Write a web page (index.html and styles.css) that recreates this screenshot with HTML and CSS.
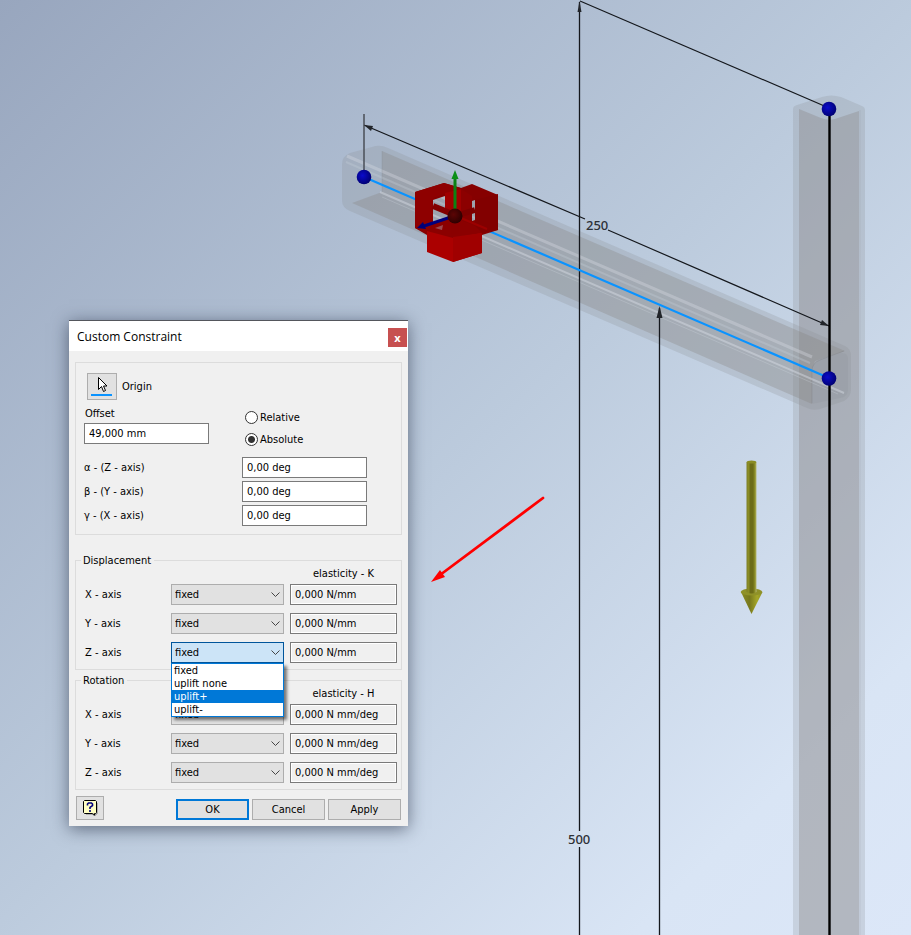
FILE: index.html
```html
<!DOCTYPE html>
<html lang="en">
<head>
    <meta charset="UTF-8">
    <meta name="viewport" content="width=device-width, initial-scale=1.0">
    <title>Custom Constraint</title>
    <link rel="stylesheet" href="styles.css">
</head>
<body>
<main class="viewport">
    <!-- 3D model -->
    <svg class="scene" viewBox="0 0 911 935" preserveAspectRatio="xMidYMid slice" role="img" aria-label="Frame model">
        <defs>
            <radialGradient id="nodeFill" cx="0.4" cy="0.4" r="0.65">
                <stop offset="0" stop-color="#0a0acb"/>
                <stop offset="1" stop-color="#00006e"/>
            </radialGradient>
            <radialGradient id="hubFill" cx="0.4" cy="0.4" r="0.65">
                <stop offset="0" stop-color="#5c0505"/>
                <stop offset="1" stop-color="#2b0000"/>
            </radialGradient>
            <linearGradient id="shaftFill">
                <stop offset="0" stop-color="#7f8028"/>
                <stop offset="0.2" stop-color="#8a8c24"/>
                <stop offset="0.4" stop-color="#6c6c18"/>
                <stop offset="0.65" stop-color="#6c6c18"/>
                <stop offset="0.85" stop-color="#8f9128"/>
                <stop offset="1" stop-color="#b5b878"/>
            </linearGradient>
            <linearGradient id="coneFill">
                <stop offset="0" stop-color="#8a8c24"/>
                <stop offset="0.4" stop-color="#77781d"/>
                <stop offset="0.75" stop-color="#a5a728"/>
                <stop offset="1" stop-color="#8a8c24"/>
            </linearGradient>
        </defs>

        <!-- column -->
        <path d="M793 935V109Q793 106 797 105L822 97Q831 94 841 97L862 106Q865 107 865 110V935Z" fill="#8c8f94" fill-opacity="0.24"/>
        <path d="M799 935V109L821 118Q828 121 835 119L859 111V935Z" fill="#85817f" fill-opacity="0.32"/>
        <path d="M860 110V935" stroke="#8b9097" stroke-opacity="0.2"/>

        <!-- beam -->
        <path d="M342 165Q342 156 350 153L372 147Q380 144 388 148L845 346Q851 349 851 356V389Q851 397 844 401L820 409Q813 411 807 408L350 211Q342 208 342 200Z" fill="#8c8f94" fill-opacity="0.25"/>
        <path d="M382 151L845 351L815 361L812 369V404L352 203L382 192Z" fill="#85817f" fill-opacity="0.3"/>
        <path d="M812 404V371Q812 363 820 360L840 353Q848 352 848 359V391Q847 397 840 398Z" fill="#8e9096" fill-opacity="0.2"/>
        <path d="M812 403V371Q812 363 820 360L844 351" fill="none" stroke="#77797d" stroke-opacity="0.3"/>
        <path d="M347 156L812 357" stroke="#d9dee6" stroke-opacity="0.35" stroke-width="3"/>
        <path d="M346 162L810 363" stroke="#c7cfda" stroke-opacity="0.3" stroke-width="2"/>
        <path d="M380 192L844 393" stroke="#d9dee6" stroke-opacity="0.45" stroke-width="2"/>
        <path d="M382 197L838 394" stroke="#d9dee6" stroke-opacity="0.25"/>
        <path d="M382 151V192" stroke="#84888e" stroke-opacity="0.25"/>

        <!-- dimensions -->
        <g fill="none" stroke="#14171c" stroke-width="1">
            <path d="M579.5 2V831M579.5 847V935" stroke-width="1.3"/>
            <path d="M659.5 308V935" stroke-width="1.3"/>
            <path d="M580 1L829 108" stroke-width="1.2"/>
            <path d="M364 125L585 219M608 230L829 326" stroke-width="1.2"/>
            <path d="M364 114V177" stroke="#50555e" stroke-width="1.6"/>
        </g>
        <g fill="#22252a">
            <path d="M579.5 1L577.5 12H581.5Z"/>
            <path d="M659.5 306L656.5 318H662.5Z"/>
            <path d="M364 125L373 126L371 131Z"/>
            <path d="M829 326L820 325L822 320Z"/>
        </g>
        <text class="dimension" x="586" y="230">250</text>
        <text class="dimension" x="568" y="844">500</text>

        <path d="M829.5 108V935" stroke="#000000" stroke-width="2.4"/>
        <path d="M364 177L829 378" stroke="#0a93ff" stroke-width="2.2"/>
        <circle cx="829" cy="109" r="7.3" fill="url(#nodeFill)"/>
        <circle cx="829" cy="378.5" r="7.3" fill="url(#nodeFill)"/>
        <circle cx="364" cy="177" r="7.3" fill="url(#nodeFill)"/>

        <!-- constraint symbol -->
        <g>
            <path fill-rule="evenodd" d="M415 192L444 183L461 188L472 184L498 195V230L482 235H427L415 228ZM433 200V224L452 218L445 212V196ZM472 201V221L475 220V200Z" fill="#860000"/>
            <path d="M415 192L444 183L461 188L433 198V224L427 233L415 228Z" fill="#8e0000"/>
            <path d="M445 193L461 189V212H445Z" fill="#a00000"/>
            <path d="M461 189L472 196V212H461Z" fill="#8c0000"/>
            <path d="M475 200L498 194V230L475 234Z" fill="#820000"/>
            <path d="M433 224L453 217L475 226L482 233L453 240L427 232Z" fill="#8b0000"/>
            <path d="M427 231L453 238L482 233V253L453 262L427 252Z" fill="#ab0000"/>
            <path d="M453 237L482 233V253L453 262Z" fill="#a00000"/>
            <path d="M435 228L443 225L442 230Z" fill="#9c4a50"/>
            <path d="M433 206L455 215" stroke="#820000" stroke-width="6"/>
            <path d="M455 216L475 210" stroke="#7d0000" stroke-width="6"/>
            <path d="M455 216V234" stroke="#8a0000" stroke-width="8"/>
            <path d="M456 216L487 229" stroke="#9c0000" stroke-width="2"/>
            <path d="M455 215V178" stroke="#0b8213" stroke-width="3"/>
            <path d="M455 170L451.5 179H458.5Z" fill="#0b8f16"/>
            <path d="M451 217L424 226" stroke="#00007d" stroke-width="3"/>
            <path d="M417 228L423 222L426 229Z" fill="#000078"/>
            <circle cx="455" cy="216" r="7.5" fill="url(#hubFill)"/>
        </g>

        <!-- load arrow -->
        <path d="M741 592L751.5 614L762.5 592Z" fill="url(#coneFill)"/>
        <ellipse cx="751.5" cy="592" rx="10.8" ry="3.5" fill="#8f9128"/>
        <path d="M746.5 462V592Q751.5 595 756.5 592V462Z" fill="url(#shaftFill)"/>
        <ellipse cx="751.5" cy="462" rx="4.8" ry="1.6" fill="#8a8c24"/>

        <!-- callout -->
        <path d="M543 498L440 575" stroke="#ff0000" stroke-width="2.8" stroke-linecap="round"/>
        <path d="M431 582L440 570L445 577Z" fill="#ff0000"/>
    </svg>

    <!-- Custom Constraint dialog -->
    <form class="dialog" role="dialog" aria-labelledby="dialogTitle">
        <header class="title-bar">
            <h1 id="dialogTitle">Custom Constraint</h1>
            <button type="button" class="close-btn" aria-label="Close">x</button>
        </header>

        <div class="dialog-body">
            <fieldset class="group origin-group">
                <div class="origin-row">
                    <button type="button" id="origin" class="pick-btn">
                        <svg width="22" height="20" viewBox="0 0 22 20" aria-hidden="true">
                            <path d="M7.5 0.5V12.5L10.5 9.5L12.5 14.5L14.5 13.5L12.5 9H16Z" fill="#ffffff" stroke="#000000"/>
                            <path d="M0 18H21" stroke="#0a93ff" stroke-width="2"/>
                        </svg>
                    </button>
                    <label for="origin">Origin</label>
                </div>
                <div class="offset-row">
                    <div class="offset-field">
                        <label for="offset">Offset</label>
                        <input type="text" id="offset" value="49,000 mm">
                    </div>
                    <div class="radio-list">
                        <label><input type="radio" name="mode">Relative</label>
                        <label><input type="radio" name="mode" checked>Absolute</label>
                    </div>
                </div>
                <div class="angle-grid">
                    <label for="alpha">α - (Z - axis)</label>
                    <input type="text" id="alpha" value="0,00 deg">
                    <label for="beta">β - (Y - axis)</label>
                    <input type="text" id="beta" value="0,00 deg">
                    <label for="gamma">γ - (X - axis)</label>
                    <input type="text" id="gamma" value="0,00 deg">
                </div>
            </fieldset>

            <fieldset class="group axis-group">
                <legend>Displacement</legend>
                <div class="axis-grid">
                    <span class="column-title">elasticity - K</span>

                    <label for="dispX">X - axis</label>
                    <div class="select-box">
                        <select id="dispX"><option>fixed</option><option>uplift none</option><option>uplift+</option><option>uplift-</option></select>
                        <svg class="chevron" width="9" height="6" viewBox="0 0 9 6" aria-hidden="true"><path d="M0.5 0.5L4.5 4.5L8.5 0.5"/></svg>
                    </div>
                    <input type="text" value="0,000 N/mm" aria-label="X elasticity K" readonly>

                    <label for="dispY">Y - axis</label>
                    <div class="select-box">
                        <select id="dispY"><option>fixed</option><option>uplift none</option><option>uplift+</option><option>uplift-</option></select>
                        <svg class="chevron" width="9" height="6" viewBox="0 0 9 6" aria-hidden="true"><path d="M0.5 0.5L4.5 4.5L8.5 0.5"/></svg>
                    </div>
                    <input type="text" value="0,000 N/mm" aria-label="Y elasticity K" readonly>

                    <label for="dispZ">Z - axis</label>
                    <div class="select-box open">
                        <select id="dispZ"><option>fixed</option><option>uplift none</option><option>uplift+</option><option>uplift-</option></select>
                        <svg class="chevron" width="9" height="6" viewBox="0 0 9 6" aria-hidden="true"><path d="M0.5 0.5L4.5 4.5L8.5 0.5"/></svg>
                        <ul class="option-list" role="listbox" aria-label="Z - axis">
                            <li role="option">fixed</li>
                            <li role="option">uplift none</li>
                            <li role="option" class="active" aria-selected="true">uplift+</li>
                            <li role="option">uplift-</li>
                        </ul>
                    </div>
                    <input type="text" value="0,000 N/mm" aria-label="Z elasticity K" readonly>
                </div>
            </fieldset>

            <fieldset class="group axis-group">
                <legend>Rotation</legend>
                <div class="axis-grid">
                    <span class="column-title">elasticity - H</span>

                    <label for="rotX">X - axis</label>
                    <div class="select-box">
                        <select id="rotX"><option>fixed</option></select>
                        <svg class="chevron" width="9" height="6" viewBox="0 0 9 6" aria-hidden="true"><path d="M0.5 0.5L4.5 4.5L8.5 0.5"/></svg>
                    </div>
                    <input type="text" value="0,000 N mm/deg" aria-label="X elasticity H" readonly>

                    <label for="rotY">Y - axis</label>
                    <div class="select-box">
                        <select id="rotY"><option>fixed</option></select>
                        <svg class="chevron" width="9" height="6" viewBox="0 0 9 6" aria-hidden="true"><path d="M0.5 0.5L4.5 4.5L8.5 0.5"/></svg>
                    </div>
                    <input type="text" value="0,000 N mm/deg" aria-label="Y elasticity H" readonly>

                    <label for="rotZ">Z - axis</label>
                    <div class="select-box">
                        <select id="rotZ"><option>fixed</option></select>
                        <svg class="chevron" width="9" height="6" viewBox="0 0 9 6" aria-hidden="true"><path d="M0.5 0.5L4.5 4.5L8.5 0.5"/></svg>
                    </div>
                    <input type="text" value="0,000 N mm/deg" aria-label="Z elasticity H" readonly>
                </div>
            </fieldset>

            <footer class="actions">
                <button type="button" class="btn help-btn" aria-label="Help">
                    <svg width="15" height="16" viewBox="0 0 15 16" aria-hidden="true">
                        <path d="M3 14H9L12 16V14H14V3" fill="none" stroke="#808080"/>
                        <path d="M1.5 0.5H12.5L13.5 1.5V12.5L12.5 13.5H11.5V15L9.5 13.5H1.5L0.5 12.5V1.5Z" fill="#ffffc4" stroke="#000000"/>
                        <path d="M4.5 5.5V4L5.5 3H8.5L9.5 4V5.5L7 7.5V9M7 10V12" fill="none" stroke="#00007d" stroke-width="1.6"/>
                    </svg>
                </button>
                <button type="submit" class="btn ok-btn">OK</button>
                <button type="button" class="btn">Cancel</button>
                <button type="button" class="btn">Apply</button>
            </footer>
        </div>
    </form>
</main>
</body>
</html>
```
FILE: styles.css
```css
* {
    box-sizing: border-box;
}

body {
    margin: 0;
    font-family: Tahoma, "DejaVu Sans Condensed", "Noto Sans", sans-serif;
    font-size: 11px;
    line-height: 13px;
    color: #000000;
}

.viewport {
    position: relative;
    min-height: 100vh;
    overflow: hidden;
    background: linear-gradient(135deg, #98a6be 0%, #bccbdd 50%, #d9e5f5 85%, #dce7f8 100%);
}

.scene {
    display: block;
    width: 100%;
    height: 100vh;
}

.dimension {
    font-family: "Noto Sans", sans-serif;
    font-size: 13px;
    font-weight: 500;
    fill: #2c3036;
}

/* Dialog window */
.dialog {
    position: absolute;
    left: 69px;
    top: 320px;
    width: 339px;
    background: #f0f0f0;
    border-top: 1px solid #54565c;
    box-shadow: 0 3px 16px rgba(20, 30, 50, 0.55);
}

.title-bar {
    display: flex;
    justify-content: space-between;
    align-items: center;
    height: 30px;
    padding: 0 1px 0 8px;
    background: #ffffff;
}

.title-bar h1 {
    margin: 0;
    font-family: "Segoe UI", "Open Sans", sans-serif;
    font-size: 12px;
    font-weight: normal;
}

.close-btn {
    width: 19px;
    height: 19px;
    margin-top: 3px;
    padding: 0;
    border: none;
    background: #c75050;
    color: #ffffff;
    font: bold 11px/16px "Open Sans", sans-serif;
}

.dialog-body {
    display: flex;
    flex-direction: column;
    padding: 11px 6px 6px;
}

.group {
    position: relative;
    min-width: 0;
    margin: 0;
    padding: 0;
    border: 1px solid #dcdcdc;
}

.group legend {
    margin-left: -4px;
    padding: 0 3px 0 2px;
}

input[type="text"] {
    width: 100%;
    height: 21px;
    padding: 0 4px;
    border: 1px solid #7a7a7a;
    background: #ffffff;
    font: inherit;
    color: inherit;
}

input[type="text"]:read-only {
    background: #f0f0f0;
    box-shadow: inset 0 0 0 1px #ffffff;
}

/* Origin, offset and angles */
.origin-group {
    padding: 10px 34px 8px 8px;
}

.origin-row {
    display: flex;
    align-items: center;
    gap: 5px;
    padding-left: 3px;
}

.pick-btn {
    display: flex;
    justify-content: center;
    align-items: center;
    width: 30px;
    height: 27px;
    padding: 0;
    border: 1px solid #adadad;
    background: #e1e1e1;
}

.offset-row {
    display: grid;
    grid-template-columns: 158px 1fr;
    margin-top: 7px;
}

.offset-field {
    display: flex;
    flex-direction: column;
    gap: 3px;
    width: 125px;
}

.offset-field label {
    padding-left: 1px;
}

.radio-list {
    display: flex;
    flex-direction: column;
    gap: 8px;
    padding: 3px 0 0 3px;
}

.radio-list label {
    display: flex;
    align-items: center;
    gap: 2px;
    height: 14px;
}

.radio-list input {
    appearance: none;
    width: 13px;
    height: 13px;
    margin: 0;
    border: 1px solid #333333;
    border-radius: 50%;
    background: #ffffff;
}

.radio-list input:checked {
    background: radial-gradient(circle, #333333 3px, #ffffff 4px);
}

.angle-grid {
    display: grid;
    grid-template-columns: 158px 1fr;
    align-items: center;
    row-gap: 3px;
    margin-top: 11px;
}

/* Displacement and rotation */
.axis-group {
    height: 116px;
    margin-top: 4px;
    padding: 0 4px 0 9px;
}

.origin-group + .axis-group {
    margin-top: 19px;
}

.axis-grid {
    display: grid;
    grid-template-columns: 86px 113px 1fr;
    row-gap: 8px;
    align-items: center;
}

.axis-grid > input {
    justify-self: end;
    width: 107px;
}

.column-title {
    grid-column: 3;
    margin: 0 0 -4px 6px;
    text-align: center;
}

.select-box {
    position: relative;
}

.select-box select {
    appearance: none;
    display: block;
    width: 100%;
    height: 21px;
    padding: 0 3px;
    border: 1px solid #adadad;
    border-radius: 0;
    background: #e1e1e1;
    font: inherit;
    color: inherit;
}

.select-box.open select {
    border-color: #00559b;
    background: #cce4f7;
}

.chevron {
    position: absolute;
    right: 4px;
    top: 8px;
    pointer-events: none;
    fill: none;
    stroke: #444444;
}

.option-list {
    position: absolute;
    z-index: 1;
    left: 0;
    top: 100%;
    width: 100%;
    margin: 0;
    padding: 0;
    border: 1px solid #0078d7;
    background: #ffffff;
    box-shadow: 3px 3px 3px rgba(0, 0, 0, 0.5);
    list-style: none;
}

.option-list li {
    padding: 0 2px;
}

.option-list .active {
    background: #0078d7;
    color: #ffffff;
}

/* Buttons */
.actions {
    display: flex;
    align-items: flex-end;
    gap: 3px;
    margin-top: 6px;
    padding: 0 1px;
}

.btn {
    width: 73px;
    height: 21px;
    padding: 0;
    border: 1px solid #adadad;
    background: #e1e1e1;
    font: inherit;
    color: inherit;
}

.help-btn {
    display: flex;
    justify-content: center;
    align-items: center;
    width: 28px;
    height: 24px;
    margin-right: auto;
}

.ok-btn {
    border: 2px solid #0078d7;
}
```
